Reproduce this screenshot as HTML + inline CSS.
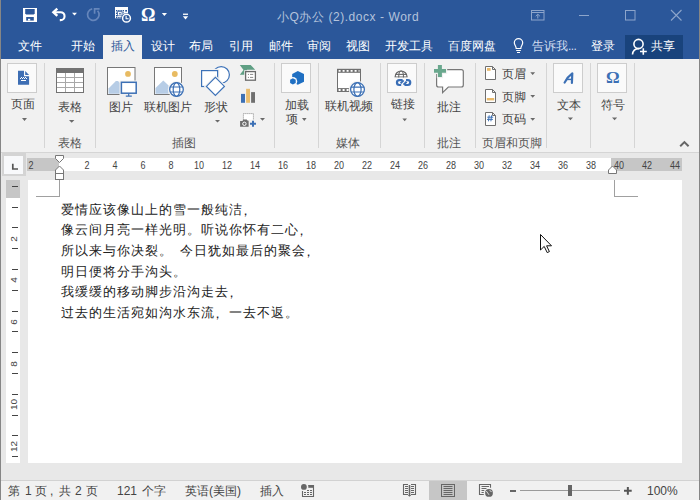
<!DOCTYPE html>
<html><head><meta charset="utf-8">
<style>
*{margin:0;padding:0;box-sizing:border-box}
html,body{width:700px;height:500px;overflow:hidden}
body{position:relative;background:#e8e8e8;font-family:"Liberation Sans",sans-serif;color:#444}
.a{position:absolute}
.t{position:absolute;white-space:nowrap;line-height:12px;font-size:12px}
#title{left:0;top:0;width:700px;height:59px;background:#2b579a}
.tab{color:#fff}
.lbl{color:#444}
.glbl{color:#555}
.sep{position:absolute;top:63px;width:1px;height:85px;background:#d5d5d5}
.box{position:absolute;top:63px;width:30px;height:30px;background:#fafafa;border:1px solid #cdcdcd}
.dd{position:absolute;width:0;height:0;border-left:3px solid transparent;border-right:3px solid transparent;border-top:3px solid #666}
.rn{position:absolute;top:161px;font-size:10px;line-height:10px;transform:scaleX(0.9);color:#444;width:20px;text-align:center}
.vt{position:absolute;left:12px;width:6px;height:1px;background:#444}
.vn{position:absolute;left:9px;width:10px;font-size:10px;line-height:10px;color:#444;text-align:center;transform:translateX(0.6px) rotate(-90deg) scaleY(0.88)}
.cm{position:relative;left:-4px;top:1px}
.sp{display:inline-block;width:7px}
.sb{color:#444}
.doc{position:absolute;left:61px;font-size:13px;letter-spacing:1px;line-height:14px;color:#222;white-space:nowrap}
</style></head><body>
<!-- title bar -->
<div class="a" id="title"></div>
<div class="a" style="left:0;top:0;width:1px;height:500px;background:#868686;z-index:5"></div>
<div class="a" style="left:699px;top:0;width:1px;height:500px;background:#868686;z-index:5"></div>


<!-- title texts -->
<div class="t" style="left:277px;top:11px;color:#b4c3dc;letter-spacing:0.55px">小Q办公 (2).docx - Word</div>

<div class="a" style="left:103px;top:35px;width:39px;height:24px;background:#f1f1f1"></div>
<div class="a" style="left:625px;top:35px;width:58px;height:24px;background:#19437c"></div>
<svg class="a" style="left:0;top:0" width="700" height="59" viewBox="0 0 700 59">
 <!-- save -->
 <rect x="23" y="8" width="14" height="14" fill="#fff"/>
 <path d="M25.2,9 H34.7 V13.6 L33.7,14.6 H26.2 L25.2,13.6 Z" fill="#2b579a"/>
 <rect x="26.2" y="17" width="7.6" height="3.6" fill="#2b579a"/>
 <rect x="28" y="18.8" width="2.2" height="1.8" fill="#fff"/>
 <!-- undo -->
 <path d="M57.3,8.6 L53.4,12.2 L57.3,15.8" fill="none" stroke="#fff" stroke-width="2.4" stroke-linejoin="miter"/>
 <path d="M54,12.2 H60.6 A3.95,3.95 0 0 1 60.6,20.1 H59.8" fill="none" stroke="#fff" stroke-width="2.1"/>
 <path d="M72,12.8 H77 L74.5,15.6 Z" fill="#fff"/>
 <!-- redo disabled -->
 <path d="M92.2,8.9 A5.8,5.8 0 1 0 97.6,10.7" fill="none" stroke="#6686bb" stroke-width="1.7"/>
 <path d="M94.6,13.8 V8.9 H99.6" fill="none" stroke="#6686bb" stroke-width="1.7"/>
 <!-- table/clock -->
 <rect x="115" y="7" width="13" height="11.3" fill="#fff"/>
 <rect x="116.0" y="10.0" width="1.4" height="1.4" fill="#2b579a"/>
 <rect x="118.2" y="10.0" width="1.4" height="1.4" fill="#2b579a"/>
 <rect x="120.4" y="10.0" width="1.4" height="1.4" fill="#2b579a"/>
 <rect x="122.6" y="10.0" width="1.4" height="1.4" fill="#2b579a"/>
 <rect x="125.2" y="10.0" width="1.8" height="1.6" fill="#2b579a"/>
 <rect x="116.0" y="12.6" width="1.4" height="1.4" fill="#2b579a"/>
 <rect x="116.0" y="15.0" width="1.4" height="1.4" fill="#2b579a"/>
 <rect x="116.0" y="17.0" width="1.4" height="1.2" fill="#2b579a"/>
 <rect x="118.2" y="17.0" width="1.4" height="1.2" fill="#2b579a"/>
 <rect x="120.4" y="17.0" width="1.2" height="1.2" fill="#2b579a"/>
 <rect x="122.6" y="12.2" width="1.2" height="1.2" fill="#2b579a"/>
 <rect x="117.5" y="11.4" width="4.6" height="0.6" fill="#2b579a"/>
 <rect x="117.5" y="15.5" width="4.6" height="0.6" fill="#2b579a"/>
 <rect x="117.3" y="11.4" width="0.7" height="4.7" fill="#2b579a"/>
 <rect x="121.7" y="11.4" width="0.7" height="4.7" fill="#2b579a"/>
 <rect x="119.2" y="12.9" width="1.5" height="1.5" fill="#2b579a"/>
 <circle cx="126.5" cy="18.2" r="5.3" fill="#2b579a"/>
 <circle cx="126.5" cy="18.2" r="3.9" fill="#2b579a" stroke="#fff" stroke-width="1.5"/>
 <path d="M126.1,15.8 V18.7 H128.6" fill="none" stroke="#fff" stroke-width="1.1"/>
 <path d="M161.8,13 H167 L164.4,16 Z" fill="#fff"/>
 <!-- customize -->
 <rect x="183" y="13.6" width="5" height="1.3" fill="#fff"/>
 <path d="M182.8,16.2 H188.2 L185.5,19.4 Z" fill="#fff"/>
 <!-- ribbon options -->
 <rect x="531.5" y="10.5" width="12.5" height="9.5" fill="none" stroke="#8da5cb" stroke-width="1"/>
 <path d="M531.5,12.5 H544" stroke="#8da5cb" stroke-width="1"/>
 <path d="M537.8,18.5 V14.6 M535.7,16.2 L537.8,14.2 L539.9,16.2" fill="none" stroke="#8da5cb" stroke-width="1"/>
 <!-- min max close -->
 <rect x="579" y="15" width="10" height="1" fill="#8da5cb"/>
 <rect x="625.5" y="10.5" width="9.5" height="9.5" fill="none" stroke="#8da5cb" stroke-width="1"/>
 <path d="M671,10 L681.5,20.5 M681.5,10 L671,20.5" stroke="#8da5cb" stroke-width="1.1"/>
 <!-- bulb -->
 <path d="M516.2,48.5 C516.2,46 514.3,45 514.3,42.8 A4.2,4.2 0 0 1 522.7,42.8 C522.7,45 520.8,46 520.8,48.5 Z" fill="none" stroke="#fff" stroke-width="1.2"/>
 <path d="M516.2,50.5 H520.8 M517,52.5 H520" stroke="#fff" stroke-width="1.1"/>
 <!-- person -->
 <circle cx="638.5" cy="44" r="4.6" fill="none" stroke="#fff" stroke-width="1.6"/>
 <path d="M632.5,54.5 C632.8,50.5 635.5,48.6 639,48.5" fill="none" stroke="#fff" stroke-width="1.6"/>
 <path d="M643.3,48.3 V54.8 M640,51.5 H646.8" stroke="#fff" stroke-width="1.6"/>
</svg>
<div class="t" style="left:141px;top:6px;font-family:'Liberation Serif',serif;font-weight:bold;font-size:18px;line-height:18px;color:#fff">Ω</div>

<!-- tabs -->
<div class="t tab" style="left:18px;top:40px">文件</div>
<div class="t tab" style="left:71px;top:40px">开始</div>
<div class="t" style="left:111px;top:40px;color:#2b579a">插入</div>
<div class="t tab" style="left:151px;top:40px">设计</div>
<div class="t tab" style="left:189px;top:40px">布局</div>
<div class="t tab" style="left:229px;top:40px">引用</div>
<div class="t tab" style="left:269px;top:40px">邮件</div>
<div class="t tab" style="left:307px;top:40px">审阅</div>
<div class="t tab" style="left:346px;top:40px">视图</div>
<div class="t tab" style="left:385px;top:40px">开发工具</div>
<div class="t tab" style="left:448px;top:40px">百度网盘</div>
<div class="t tab" style="left:532px;top:40px;color:#d3def0">告诉我<span style="letter-spacing:-0.6px">...</span></div>
<div class="t tab" style="left:591px;top:40px">登录</div>
<div class="t tab" style="left:651px;top:40px">共享</div>

<!-- ribbon -->
<div class="a" style="left:0;top:59px;width:700px;height:93px;background:#f1f1f1"></div>
<div class="a" style="left:0;top:152px;width:700px;height:1px;background:#d5d5d5"></div>

<!-- separators -->
<div class="sep" style="left:44px"></div>
<div class="sep" style="left:95px"></div>
<div class="sep" style="left:274px"></div>
<div class="sep" style="left:318px"></div>
<div class="sep" style="left:380px"></div>
<div class="sep" style="left:424px"></div>
<div class="sep" style="left:475px"></div>
<div class="sep" style="left:546px"></div>
<div class="sep" style="left:590px"></div>
<div class="sep" style="left:634px"></div>
<!-- boxes -->
<div class="box" style="left:7px"></div>
<div class="box" style="left:281px"></div>
<div class="box" style="left:387px"></div>
<div class="box" style="left:553px"></div>
<div class="box" style="left:597px"></div>
<svg class="a" style="left:0;top:59px" width="700" height="93" viewBox="0 59 700 93">
 <!-- page icon -->
 <path d="M18,70.8 H24 V76.2 H29.1 V84.8 H18 Z" fill="#3d6eb4"/>
 <path d="M25.2,71 L29.1,75 H25.2 Z" fill="#3d6eb4"/>
 <rect x="21" y="77" width="1" height="1" fill="#fff"/>
 <rect x="23" y="77" width="1" height="1" fill="#fff"/>
 <rect x="25" y="77" width="1" height="1" fill="#fff"/>
 <rect x="20" y="78" width="1" height="1" fill="#fff"/>
 <rect x="22" y="78" width="1" height="1" fill="#fff"/>
 <rect x="24" y="78" width="1" height="1" fill="#fff"/>
 <rect x="26" y="78" width="1" height="1" fill="#fff"/>
 <rect x="21" y="80" width="5" height="1" fill="#fff"/>
 <!-- table icon -->
 <rect x="56" y="68" width="28" height="25" fill="#727272"/>
 <rect x="57" y="73" width="26" height="19" fill="#fff"/>
 <path d="M65.5,73 V92 M74.5,73 V92 M57,77.5 H83 M57,82.5 H83 M57,87.5 H83" stroke="#a8a8a8" stroke-width="1"/>
 <!-- picture -->
 <rect x="107.5" y="67.5" width="27.5" height="27" fill="#fff" stroke="#777" stroke-width="1"/>
 <circle cx="128" cy="73.9" r="2.9" fill="#e8bb62"/>
 <path d="M108.5,93.8 V88.5 L115.9,80.9 H118 L120,83 V93.8 Z" fill="#b7cde6"/>
 <rect x="119.5" y="80.5" width="18.5" height="15" fill="#f1f1f1"/>
 <rect x="121.4" y="82.3" width="14.8" height="10.9" fill="#fff" stroke="#3c70b5" stroke-width="1.5"/>
 <path d="M128.7,93.5 V95.5 M125.8,96.2 H131.8" stroke="#3c70b5" stroke-width="1.2"/>
 <!-- online picture -->
 <rect x="154.5" y="67.5" width="27" height="27" fill="#fff" stroke="#777" stroke-width="1"/>
 <circle cx="174.8" cy="74" r="2.9" fill="#e8bb62"/>
 <path d="M155.5,93.8 V88.1 L163.3,80.6 L168.6,85.6 V93.8 Z" fill="#b7cde6"/>
 <circle cx="176.5" cy="89.5" r="8.6" fill="#f1f1f1"/>
 <circle cx="176.5" cy="89.5" r="6.8" fill="#fff" stroke="#3c70b5" stroke-width="1.3"/>
 <ellipse cx="176.5" cy="89.5" rx="3.3" ry="6.8" fill="none" stroke="#3c70b5" stroke-width="1.2"/>
 <path d="M170,87 H183 M170,92 H183" stroke="#3c70b5" stroke-width="1.2"/>
 <!-- shapes -->
 <circle cx="221.2" cy="74.8" r="8.2" fill="#fff" stroke="#3d72b8" stroke-width="1.2"/>
 <rect x="201.6" y="70.6" width="16" height="15.9" fill="#fff" stroke="#f1f1f1" stroke-width="3.6"/>
 <rect x="201.6" y="70.6" width="16" height="15.9" fill="#fff" stroke="#3d72b8" stroke-width="1.2"/>
 <path d="M215.4,77.4 L224.4,86.4 L215.4,95.4 L206.4,86.4 Z" fill="#fff" stroke="#f1f1f1" stroke-width="3.6"/>
 <path d="M215.4,77.4 L224.4,86.4 L215.4,95.4 L206.4,86.4 Z" fill="#fff" stroke="#3d72b8" stroke-width="1.2"/>
 <!-- smartart -->
 <path d="M239.8,65.1 H250.7 L255.2,69.7 H247 V74.7 H239.8 L243.5,69.9 Z" fill="#5f9f84"/>
 <rect x="244.2" y="70.2" width="12.6" height="11.4" fill="#f1f1f1"/>
 <rect x="245.6" y="71.6" width="9.8" height="8.6" fill="#fff" stroke="#6a6a6a" stroke-width="1.3"/>
 <path d="M247.9,74.4 h1.1 M250,74.4 h3.2 M247.9,77.4 h1.1 M250,77.4 h3.2" stroke="#8a8a8a" stroke-width="1"/>
 <!-- chart -->
 <rect x="241" y="93.9" width="4" height="8.9" fill="#3c70b5"/>
 <rect x="246.1" y="88.8" width="3.9" height="14" fill="#e9bd6f"/>
 <rect x="251.1" y="92.1" width="3.9" height="10.7" fill="#6f6f6f"/>
 <!-- screenshot -->
 <rect x="243.4" y="113.6" width="10" height="7" fill="#fff" stroke="#888" stroke-width="1" stroke-dasharray="1 1"/>
 <path d="M240.1,121 H242.5 L243.3,119.5 H246.8 L247.6,121 H248.8 V126.7 H240.1 Z" fill="#6e6e6e"/>
 <circle cx="244.4" cy="123.8" r="1.7" fill="none" stroke="#fff" stroke-width="1"/>
 <rect x="248.8" y="119.7" width="8.2" height="8" fill="#f1f1f1"/>
 <path d="M253,120.7 V126.7 M250,123.7 H256" stroke="#3c70b5" stroke-width="2"/>
 <!-- add-in -->
 <path d="M297.8,71 L304,73.9 V81.7 L297.8,84.8 L292.2,82 V73.9 Z" fill="#1f6fc2"/>
 <circle cx="292.9" cy="81.4" r="4.3" fill="#f8f9fb"/>
 <path d="M292.9,78.2 L295.7,79.8 V83 L292.9,84.6 L290.1,83 V79.8 Z" fill="#1f6fc2"/>
 <!-- video -->
 <rect x="337.5" y="69.4" width="23" height="22" fill="#fff" stroke="#6f6f6f" stroke-width="1"/>
 <rect x="337" y="68.9" width="24" height="3.9" fill="#6f6f6f"/>
 <rect x="337" y="88.1" width="24" height="3.8" fill="#6f6f6f"/>
 <path d="M338.6,70.9 H359.5 M338.6,90 H359.5" stroke="#fff" stroke-width="1.8" stroke-dasharray="2 2"/>
 <circle cx="357.5" cy="89.5" r="8.8" fill="#f1f1f1"/>
 <circle cx="357.5" cy="89.5" r="6.9" fill="#fff" stroke="#3c70b5" stroke-width="1.3"/>
 <ellipse cx="357.5" cy="89.5" rx="3.6" ry="6.9" fill="none" stroke="#3c70b5" stroke-width="1.2"/>
 <path d="M351,87.2 H364 M351,92 H364" stroke="#3c70b5" stroke-width="1.2"/>
 <!-- link -->
 <path d="M395.1,77 A6,6 0 0 1 407.1,77 Z" fill="#fff" stroke="#666" stroke-width="1.2"/>
 <ellipse cx="401.1" cy="77" rx="2.4" ry="6" fill="none" stroke="#666" stroke-width="1.1"/>
 <path d="M395.5,74.4 H406.7" stroke="#666" stroke-width="1.1"/>
 <rect x="394" y="77.6" width="20" height="9" fill="#f8f9fb"/>
 <path d="M402.6,80.1 H399.4 A2.45,2.45 0 0 0 399.4,85 H401.2" fill="none" stroke="#3a6eb5" stroke-width="2.2"/>
 <path d="M404.6,85 H407.8 A2.45,2.45 0 0 0 407.8,80.1 H406" fill="none" stroke="#3a6eb5" stroke-width="2.2"/>
 <path d="M400.6,83.4 L403.6,80.4 M403.6,84.8 L406.6,81.8" stroke="#3a6eb5" stroke-width="2"/>
 <!-- comment -->
 <path d="M438.6,69.6 H461.3 A2,2 0 0 1 463.3,71.6 V85 A2,2 0 0 1 461.3,87 H448.3 L442.6,92.6 V87 H438.6 A2,2 0 0 1 436.6,85 V71.6 Z" fill="#fff" stroke="#777" stroke-width="1.2"/>
 <path d="M432.8,67.8 H436.8 V63.8 H443.1 V67.8 H447.2 V74 H443.1 V78.2 H436.8 V74 H432.8 Z" fill="#f1f1f1"/>
 <path d="M434,69 H446 V72.8 H434 Z M437.9,65 H441.9 V77 H437.9 Z" fill="#69a78d"/>
 <!-- header/footer/pagenum -->
 <path d="M485.5,66.5 H492.5 L495.5,69.5 V79.5 H485.5 Z M492.5,66.5 V69.5 H495.5" fill="#fff" stroke="#6f6f6f" stroke-width="1" stroke-linejoin="miter"/>
 <rect x="487" y="68" width="3.6" height="2.8" fill="#e9b96a"/>
 <path d="M485.5,89.5 H492.5 L495.5,92.5 V102.5 H485.5 Z M492.5,89.5 V92.5 H495.5" fill="#fff" stroke="#6f6f6f" stroke-width="1" stroke-linejoin="miter"/>
 <rect x="486.8" y="98" width="7.4" height="2.4" fill="#e9b96a"/>
 <path d="M485.5,112.5 H492.5 L495.5,115.5 V125.5 H485.5 Z M492.5,112.5 V115.5 H495.5" fill="#fff" stroke="#6f6f6f" stroke-width="1" stroke-linejoin="miter"/>
 <path d="M489.2,115.3 L488.5,121.3 M491.6,115.3 L490.9,121.3 M487.3,117.2 H493.2 M487,119.4 H492.9" stroke="#3c70b5" stroke-width="1"/>
 <!-- text A -->
 <path d="M564.6,82.6 C566.5,78.6 569,75.6 572.3,73.3 L571.9,83" fill="none" stroke="#3c70b5" stroke-width="2.2" stroke-linecap="round" stroke-linejoin="round"/>
 <path d="M567,79.4 H572" stroke="#3c70b5" stroke-width="1.5"/>
 <!-- dropdown arrows -->
 <path d="M22,118 H27 L24.5,121 Z M69,120 H74.4 L71.7,122.8 Z M215,120 H220 L217.5,122.6 Z M260,118 H265 L262.5,120.8 Z M302,118 H306.6 L304.3,121 Z M402.4,118.6 H407 L404.7,121.3 Z M567.8,117.5 H573 L570.4,120.3 Z M612,117.5 H617.2 L614.6,120.3 Z M530.3,72.2 H535.1 L532.7,74.9 Z M530.3,95 H535.1 L532.7,97.7 Z M530.3,118 H535.1 L532.7,120.7 Z" fill="#6a6a6a"/>
 <!-- collapse chevron -->
 <path d="M680.2,146.3 L684.4,142.1 L688.6,146.3" fill="none" stroke="#666" stroke-width="2"/>
</svg>
<div class="t" style="left:606px;top:69px;font-family:'Liberation Serif',serif;font-weight:bold;font-size:17px;line-height:17px;color:#3c70b5">Ω</div>
<!-- labels -->
<div class="t lbl" style="left:11px;top:98px">页面</div>
<div class="t lbl" style="left:58px;top:101px">表格</div>
<div class="t lbl" style="left:109px;top:101px">图片</div>
<div class="t lbl" style="left:144px;top:101px">联机图片</div>
<div class="t lbl" style="left:204px;top:101px">形状</div>
<div class="t lbl" style="left:285px;top:99px">加载</div>
<div class="t lbl" style="left:286px;top:113px">项</div>
<div class="t lbl" style="left:325px;top:100px">联机视频</div>
<div class="t lbl" style="left:391px;top:98px">链接</div>
<div class="t lbl" style="left:437px;top:101px">批注</div>
<div class="t lbl" style="left:502px;top:68px">页眉</div>
<div class="t lbl" style="left:502px;top:91px">页脚</div>
<div class="t lbl" style="left:502px;top:113px">页码</div>
<div class="t lbl" style="left:557px;top:99px">文本</div>
<div class="t lbl" style="left:601px;top:99px">符号</div>
<div class="t glbl" style="left:58px;top:137px">表格</div>
<div class="t glbl" style="left:172px;top:137px">插图</div>
<div class="t glbl" style="left:336px;top:137px">媒体</div>
<div class="t glbl" style="left:437px;top:137px">批注</div>
<div class="t glbl" style="left:482px;top:137px">页眉和页脚</div>

<!-- ruler -->
<div class="a" style="left:2px;top:153px;width:24px;height:23px;background:#d4d4d4"></div>
<div class="a" style="left:4px;top:156px;width:19px;height:17.5px;background:#f8f9fb"></div>
<div class="a" style="left:27px;top:158px;width:655px;height:13px;background:#c6c6c6"></div>
<div class="a" style="left:59px;top:158px;width:552px;height:13px;background:#fff"></div>
<div class="rn" style="left:21.3px">2</div>
<div class="rn" style="left:77.3px">2</div>
<div class="rn" style="left:105.3px">4</div>
<div class="rn" style="left:133.3px">6</div>
<div class="rn" style="left:161.3px">8</div>
<div class="rn" style="left:189.3px">10</div>
<div class="rn" style="left:217.3px">12</div>
<div class="rn" style="left:245.3px">14</div>
<div class="rn" style="left:273.3px">16</div>
<div class="rn" style="left:301.3px">18</div>
<div class="rn" style="left:329.3px">20</div>
<div class="rn" style="left:357.3px">22</div>
<div class="rn" style="left:385.3px">24</div>
<div class="rn" style="left:413.3px">26</div>
<div class="rn" style="left:441.3px">28</div>
<div class="rn" style="left:469.3px">30</div>
<div class="rn" style="left:497.3px">32</div>
<div class="rn" style="left:525.3px">34</div>
<div class="rn" style="left:553.3px">36</div>
<div class="rn" style="left:581.3px">38</div>
<div class="rn" style="left:609.3px">40</div>
<div class="rn" style="left:637.3px">42</div>
<div class="rn" style="left:665.3px">44</div>

<svg class="a" style="left:0;top:150px" width="700" height="50" viewBox="0 150 700 50">
 <path d="M55.5,155.5 H63.5 V158.5 L59.5,162.5 L55.5,158.5 Z" fill="#fff" stroke="#777" stroke-width="1"/>
 <path d="M59.5,166 L63.5,170 V173.5 H55.5 V170 Z" fill="#fff" stroke="#777" stroke-width="1"/>
 <rect x="55.5" y="173.5" width="8" height="6" fill="#fff" stroke="#777" stroke-width="1"/>
 <path d="M612.5,166 L616.5,170 V173.5 H608.5 V170 Z" fill="#fff" stroke="#777" stroke-width="1"/>
 <path d="M12.8,163.8 V169 H18" fill="none" stroke="#555" stroke-width="1.7"/>
</svg>

<!-- vertical ruler -->
<div class="a" style="left:6px;top:180px;width:14px;height:283px;background:#fff"></div>
<div class="a" style="left:6px;top:180px;width:14px;height:18px;background:#c6c6c6"></div>

<div class="vt" style="top:186px"></div>
<div class="vt" style="top:207px"></div>
<div class="vt" style="top:227px"></div>
<div class="vt" style="top:248px"></div>
<div class="vt" style="top:269px"></div>
<div class="vt" style="top:290px"></div>
<div class="vt" style="top:311px"></div>
<div class="vt" style="top:331px"></div>
<div class="vt" style="top:352px"></div>
<div class="vt" style="top:373px"></div>
<div class="vt" style="top:394px"></div>
<div class="vt" style="top:415px"></div>
<div class="vt" style="top:435px"></div>
<div class="vt" style="top:456px"></div>
<div class="vn" style="top:233.8px">2</div>
<div class="vn" style="top:275.4px">4</div>
<div class="vn" style="top:317.0px">6</div>
<div class="vn" style="top:358.6px">8</div>
<div class="vn" style="top:400.2px">10</div>
<div class="vn" style="top:441.8px">12</div>
<!-- page -->
<div class="a" style="left:28px;top:180px;width:654px;height:283px;background:#fff"></div>
<div class="a" style="left:59px;top:180px;width:1px;height:17px;background:#a0a0a0"></div>
<div class="a" style="left:36px;top:196px;width:24px;height:1px;background:#a0a0a0"></div>
<div class="a" style="left:614px;top:180px;width:1px;height:17px;background:#a0a0a0"></div>
<div class="a" style="left:614px;top:196px;width:24px;height:1px;background:#a0a0a0"></div>
<div class="doc" style="top:203px">爱情应该像山上的雪一般纯洁<span class="cm">，</span></div>
<div class="doc" style="top:223px">像云间月亮一样光明。听说你怀有二心<span class="cm">，</span></div>
<div class="doc" style="top:244px">所以来与你决裂。<span class="sp"></span>今日犹如最后的聚会<span class="cm">，</span></div>
<div class="doc" style="top:265px">明日便将分手沟头。</div>
<div class="doc" style="top:285px">我缓缓的移动脚步沿沟走去<span class="cm">，</span></div>
<div class="doc" style="top:306px">过去的生活宛如沟水东流<span class="cm">，</span>一去不返。</div>


<!-- status bar -->
<div class="a" style="left:0;top:480px;width:700px;height:1px;background:#d2d2d2"></div>
<div class="a" style="left:0;top:481px;width:700px;height:19px;background:#f1f1f1"></div>

<div class="t sb" style="left:8px;top:485px">第</div>
<div class="t sb" style="left:25px;top:485px">1</div>
<div class="t sb" style="left:35px;top:485px">页</div>
<div class="t sb" style="left:50px;top:485px">,</div>
<div class="t sb" style="left:59px;top:485px">共</div>
<div class="t sb" style="left:75px;top:485px">2</div>
<div class="t sb" style="left:86px;top:485px">页</div>
<div class="t sb" style="left:117px;top:485px">121</div>
<div class="t sb" style="left:142px;top:485px">个字</div>
<div class="t sb" style="left:185px;top:485px">英语(美国)</div>
<div class="t sb" style="left:260px;top:485px">插入</div>
<div class="t sb" style="left:647px;top:485px">100%</div>
<div class="a" style="left:429px;top:481px;width:38px;height:19px;background:#c6c6c6"></div>
<svg class="a" style="left:0;top:480px" width="700" height="20" viewBox="0 480 700 20">
 <!-- macro -->
 <path d="M302.5,491 V496.5 H313.5 V485.5 H308.5" fill="none" stroke="#666" stroke-width="1.1"/>
 <rect x="308.3" y="485" width="5.7" height="2.8" fill="#666"/>
 <path d="M307,490.5 h2 M310,490.5 h2 M304,492.5 h2 M307,492.5 h2 M310,492.5 h2 M304,494.5 h2 M307,494.5 h2 M310,494.5 h2" stroke="#666" stroke-width="1.1"/>
 <circle cx="303.9" cy="486.9" r="2.9" fill="#666"/>
 <!-- read mode -->
 <path d="M408,484.5 H403.5 V494.5 H408 M411,484.5 H415.5 V494.5 H411" fill="none" stroke="#666" stroke-width="1.1"/>
 <path d="M405,486.5 h3 M405,488.5 h3 M405,490.5 h3 M405,492.5 h3 M411,486.5 h3 M411,488.5 h3 M411,490.5 h3 M411,492.5 h3" stroke="#666" stroke-width="1"/>
 <path d="M409.5,485 V495.5" stroke="#666" stroke-width="1.6"/>
 <path d="M407.8,495 L409.5,496.8 L411.2,495 Z" fill="#666"/>
 <!-- print layout -->
 <rect x="441.5" y="484.5" width="13" height="12" fill="none" stroke="#666" stroke-width="1"/>
 <path d="M443.5,486.5 h9 M443.5,488.5 h9 M443.5,490.5 h9 M443.5,492.5 h9 M443.5,494.5 h9" stroke="#666" stroke-width="1"/>
 <!-- web layout -->
 <path d="M483.8,494.5 H479.5 V484.5 H490.5 V487.7" fill="none" stroke="#666" stroke-width="1.1"/>
 <path d="M481.5,486.5 h7.5 M481.5,488.5 h5.3 M481.5,490.5 h3 M481.5,492.5 h2.3" stroke="#666" stroke-width="1"/>
 <circle cx="489" cy="492.9" r="5" fill="#f1f1f1"/>
 <circle cx="489" cy="492.9" r="3.9" fill="#666"/>
 <path d="M486.3,491 L489,494.8 M489.6,490.6 L491.6,491.6" stroke="#e8e8e8" stroke-width="0.9" fill="none"/>
 <!-- zoom -->
 <rect x="510" y="490" width="6" height="2" fill="#666"/>
 <rect x="520" y="490" width="100" height="1" fill="#9a9a9a"/>
 <rect x="568" y="485" width="4" height="11" fill="#666"/>
 <path d="M624,490.8 H631.7 M627.85,487 V494.7" stroke="#555" stroke-width="2"/>
</svg>
<svg class="a" style="left:540px;top:234px;z-index:9" width="14" height="20" viewBox="0 0 14 20"><path d="M0.5,0.5 V16 L4.2,12.4 L7.2,18.6 L9.4,17.6 L6.6,11.8 H11.5 Z" fill="#fff" stroke="#111" stroke-width="1" stroke-linejoin="round"/></svg>
</body></html>
